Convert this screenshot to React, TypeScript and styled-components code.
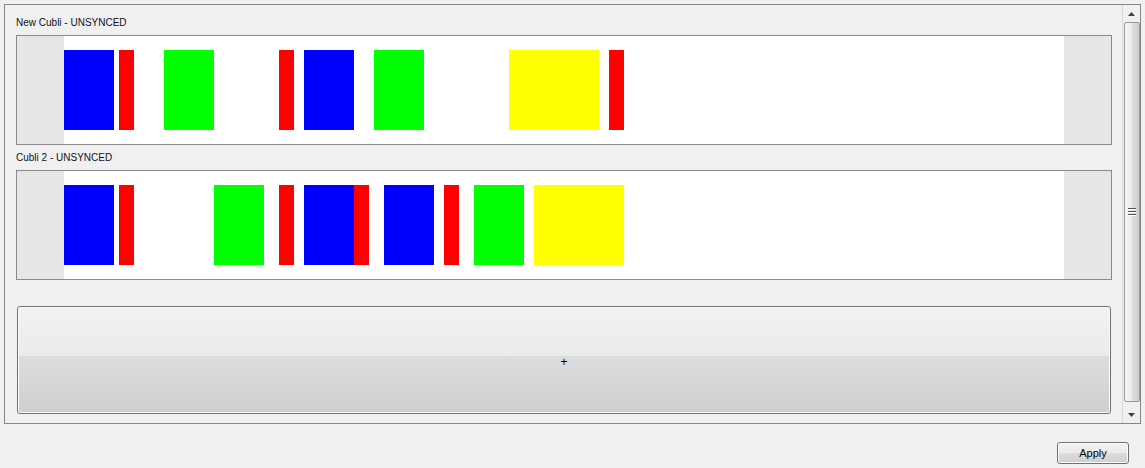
import React from 'react'
import styled, { createGlobalStyle } from 'styled-components'

const GlobalStyle = createGlobalStyle`
    html, body {
        margin: 0;
        padding: 0;
        background: #f0f0f0;
    }

    body {
        font-family: 'Liberation Sans', Arial, sans-serif;
        font-size: 10px;
        color: #000;
    }
`

type Block = { x: number; w: number; color: string }

const BLUE = '#0000ff'
const RED = '#ff0000'
const GREEN = '#00ff00'
const YELLOW = '#ffff00'

const lanes: { name: string; blocks: Block[] }[] = [
    {
        name: 'New Cubli - UNSYNCED',
        blocks: [
            { x: 0, w: 50, color: BLUE },
            { x: 55, w: 15, color: RED },
            { x: 100, w: 50, color: GREEN },
            { x: 215, w: 15, color: RED },
            { x: 240, w: 50, color: BLUE },
            { x: 310, w: 50, color: GREEN },
            { x: 445, w: 90, color: YELLOW },
            { x: 545, w: 15, color: RED },
        ],
    },
    {
        name: 'Cubli 2 - UNSYNCED',
        blocks: [
            { x: 0, w: 50, color: BLUE },
            { x: 55, w: 15, color: RED },
            { x: 150, w: 50, color: GREEN },
            { x: 215, w: 15, color: RED },
            { x: 240, w: 50, color: BLUE },
            { x: 290, w: 15, color: RED },
            { x: 320, w: 50, color: BLUE },
            { x: 380, w: 15, color: RED },
            { x: 410, w: 50, color: GREEN },
            { x: 470, w: 90, color: YELLOW },
        ],
    },
]

const Window = styled.div`
    width: 1145px;
    height: 468px;
    display: flex;
    flex-direction: column;
    background: #f0f0f0;
`

const ScrollFrame = styled.div`
    margin: 4px 4px 0 4px;
    height: 420px;
    box-sizing: border-box;
    border: 1px solid #828790;
    display: flex;
`

const Content = styled.div`
    flex: 1;
    padding: 11px 10px 0 11px;
    display: flex;
    flex-direction: column;
`

const Lane = styled.div`
    display: flex;
    flex-direction: column;
    margin-bottom: 6px;
`

const LaneLabel = styled.div`
    height: 14px;
    line-height: 14px;
    margin-bottom: 5px;
    color: #101020;
    white-space: nowrap;
`

const Track = styled.div`
    height: 110px;
    box-sizing: border-box;
    border: 1px solid #8a8a8a;
    display: flex;
    background: #e6e6e6;
`

const Margin = styled.div`
    width: 47px;
    flex: none;
`

const Canvas = styled.div`
    position: relative;
    width: 1000px;
    flex: none;
    background: #ffffff;
`

const Clip = styled.div<{ $color: string }>`
    position: absolute;
    top: 14px;
    height: 80px;
    background: ${(p) => p.$color};
`

const AddButton = styled.button`
    margin: 20px 1px 0 1px;
    height: 108px;
    box-sizing: border-box;
    border: 1px solid #707070;
    border-radius: 3px;
    background: linear-gradient(
        to bottom,
        #f2f2f2 0%,
        #ebebeb 46%,
        #dddddd 46%,
        #cfcfcf 100%
    );
    box-shadow: inset 0 0 0 1px #fcfcfc;
    font-family: 'Liberation Sans', Arial, sans-serif;
    font-size: 12px;
    color: #000;
    padding: 4px 0 0 0;
    display: flex;
    align-items: center;
    justify-content: center;
`

const ScrollBar = styled.div`
    width: 18px;
    flex: none;
    display: flex;
    flex-direction: column;
    border-left: 1px solid #dadada;
    box-sizing: border-box;
    background: #f0f0f0;
`

const ArrowButton = styled.div`
    height: 17px;
    flex: none;
    display: flex;
    align-items: center;
    justify-content: center;
`

const Thumb = styled.div`
    flex: 1;
    margin: 0 0 4px 1px;
    box-sizing: border-box;
    border: 1px solid #979797;
    border-radius: 2px;
    background: linear-gradient(
        to right,
        #f4f4f4 0%,
        #ececec 45%,
        #dcdcdc 55%,
        #cfcfcf 100%
    );
    display: flex;
    align-items: center;
    justify-content: center;
`

const Footer = styled.div`
    display: flex;
    justify-content: flex-end;
    padding: 18px 16px 0 0;
`

const ApplyButton = styled.button`
    width: 72px;
    height: 22px;
    box-sizing: border-box;
    border: 1px solid #707070;
    border-radius: 3px;
    background: linear-gradient(
        to bottom,
        #f2f2f2 0%,
        #ebebeb 48%,
        #dddddd 48%,
        #cfcfcf 100%
    );
    box-shadow: inset 0 0 0 1px #fcfcfc;
    font-family: 'Liberation Sans', Arial, sans-serif;
    font-size: 11px;
    color: #000;
    padding: 0;
`

const UpArrow = () => (
    <svg width="7" height="4" viewBox="0 0 7 4">
        <path d="M3.5 0 L7 4 L0 4 Z" fill="#404040" />
    </svg>
)

const DownArrow = () => (
    <svg width="7" height="4" viewBox="0 0 7 4">
        <path d="M0 0 L7 0 L3.5 4 Z" fill="#404040" />
    </svg>
)

const Grip = () => (
    <svg width="8" height="8" viewBox="0 0 8 8">
        <rect x="0" y="0" width="8" height="1" fill="#555" />
        <rect x="0" y="1" width="8" height="1" fill="#fff" />
        <rect x="0" y="3" width="8" height="1" fill="#555" />
        <rect x="0" y="4" width="8" height="1" fill="#fff" />
        <rect x="0" y="6" width="8" height="1" fill="#555" />
        <rect x="0" y="7" width="8" height="1" fill="#fff" />
    </svg>
)

export default function App() {
    return (
        <Window>
            <GlobalStyle />
            <ScrollFrame>
                <Content>
                    {lanes.map((lane) => (
                        <Lane key={lane.name}>
                            <LaneLabel>{lane.name}</LaneLabel>
                            <Track>
                                <Margin />
                                <Canvas>
                                    {lane.blocks.map((b, i) => (
                                        <Clip
                                            key={i}
                                            $color={b.color}
                                            style={{ left: b.x, width: b.w }}
                                        />
                                    ))}
                                </Canvas>
                                <Margin />
                            </Track>
                        </Lane>
                    ))}
                    <AddButton>+</AddButton>
                </Content>
                <ScrollBar>
                    <ArrowButton>
                        <UpArrow />
                    </ArrowButton>
                    <Thumb>
                        <Grip />
                    </Thumb>
                    <ArrowButton>
                        <DownArrow />
                    </ArrowButton>
                </ScrollBar>
            </ScrollFrame>
            <Footer>
                <ApplyButton>Apply</ApplyButton>
            </Footer>
        </Window>
    )
}
